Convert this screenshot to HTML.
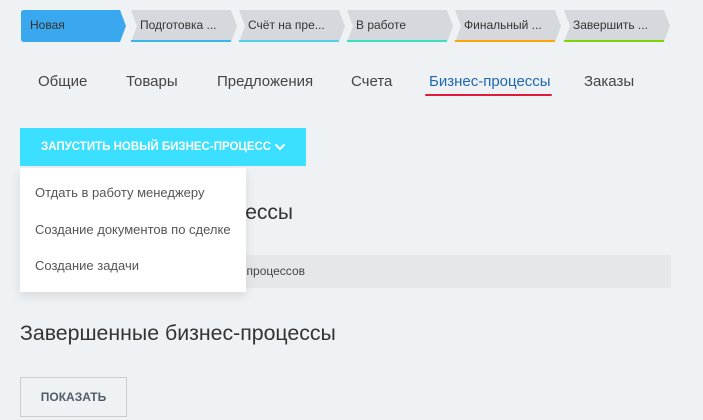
<!DOCTYPE html>
<html><head><meta charset="utf-8"><style>
*{margin:0;padding:0;box-sizing:border-box}
body{width:703px;height:420px;background:#eef2f4;font-family:"Liberation Sans",sans-serif;position:relative;overflow:hidden;color:#333}
.st{position:absolute;top:10px;height:32px;font-size:12px;line-height:30px;padding-left:9px;color:#333;white-space:nowrap}
.st .bg{position:absolute;left:0;top:0;width:100%;height:32px;z-index:-1}
.tab{position:absolute;top:73px;font-size:15px;color:#444;white-space:nowrap}
.a{position:absolute;white-space:nowrap}
</style></head><body>
<div class="st" style="left:21px;width:105px"><svg class="bg" viewBox="0 0 105 32" preserveAspectRatio="none"><path d="M3 0H99L105 16L99 32H3Q0 32 0 29V3Q0 0 3 0Z" fill="#3aa8ee"/></svg>Новая</div>
<div class="st" style="left:131px;width:106px"><svg class="bg" viewBox="0 0 106 32" preserveAspectRatio="none"><path d="M0 0H100L106 16L100 32H0L6 16Z" fill="#d5d8dc"/><rect x="0" y="30" width="100" height="2" fill="#39b7ed"/></svg>Подготовка ...</div>
<div class="st" style="left:239px;width:106px"><svg class="bg" viewBox="0 0 106 32" preserveAspectRatio="none"><path d="M0 0H100L106 16L100 32H0L6 16Z" fill="#d5d8dc"/><rect x="0" y="30" width="100" height="2" fill="#4fd1e8"/></svg>Счёт на пре...</div>
<div class="st" style="left:347px;width:106px"><svg class="bg" viewBox="0 0 106 32" preserveAspectRatio="none"><path d="M0 0H100L106 16L100 32H0L6 16Z" fill="#d5d8dc"/><rect x="0" y="30" width="100" height="2" fill="#3be0c0"/></svg>В работе</div>
<div class="st" style="left:455px;width:106px"><svg class="bg" viewBox="0 0 106 32" preserveAspectRatio="none"><path d="M0 0H100L106 16L100 32H0L6 16Z" fill="#d5d8dc"/><rect x="0" y="30" width="100" height="2" fill="#ffa400"/></svg>Финальный ...</div>
<div class="st" style="left:564px;width:106px"><svg class="bg" viewBox="0 0 106 32" preserveAspectRatio="none"><path d="M0 0H100L106 16L100 32H0L6 16Z" fill="#d5d8dc"/><rect x="0" y="30" width="100" height="2" fill="#7bd500"/></svg>Завершить ...</div>

<div class="tab" style="left:38px">Общие</div>
<div class="tab" style="left:126px">Товары</div>
<div class="tab" style="left:217px">Предложения</div>
<div class="tab" style="left:351px">Счета</div>
<div class="tab" style="left:429px;color:#2067b0">Бизнес-процессы</div>
<div class="a" style="left:425px;top:94px;width:127px;height:2px;background:#e01b3a;border-radius:1px"></div>
<div class="tab" style="left:584px">Заказы</div>

<div class="a" style="left:20px;top:128px;width:286px;height:38px;background:#3bdfff;color:#fff;font-weight:bold;font-size:11.5px;line-height:38px;padding-left:21px">ЗАПУСТИТЬ НОВЫЙ БИЗНЕС-ПРОЦЕСС <svg width="12" height="8" viewBox="0 0 12 8" style="vertical-align:middle"><path d="M1.5 1.5L6 6L10.5 1.5" stroke="#fff" stroke-width="2" fill="none"/></svg></div>

<div class="a" style="left:20px;top:201px;font-size:21px;color:#333;right:410px;text-align:right">Активные бизнес-процессы</div>
<div class="a" style="left:20px;top:255px;width:651px;height:33px;background:#e5e7e9;font-size:12px;line-height:33px">
<div class="a" style="right:366px;top:0;color:#444">Нет активных бизнес-процессов</div></div>

<div class="a" style="left:20px;top:168px;width:226px;height:124px;background:#fff;box-shadow:0 4px 10px rgba(0,0,0,.1);font-size:13px;color:#555">
<div class="a" style="left:15px;top:17px">Отдать в работу менеджеру</div>
<div class="a" style="left:15px;top:54px">Создание документов по сделке</div>
<div class="a" style="left:15px;top:90px">Создание задачи</div>
</div>

<div class="a" style="left:20px;top:321px;font-size:21.3px;color:#333">Завершенные бизнес-процессы</div>
<div class="a" style="left:20px;top:377px;width:107px;height:40px;border:1px solid #c6cdd3;font-size:12px;font-weight:bold;color:#535c69;text-align:center;line-height:38px">ПОКАЗАТЬ</div>
</body></html>
